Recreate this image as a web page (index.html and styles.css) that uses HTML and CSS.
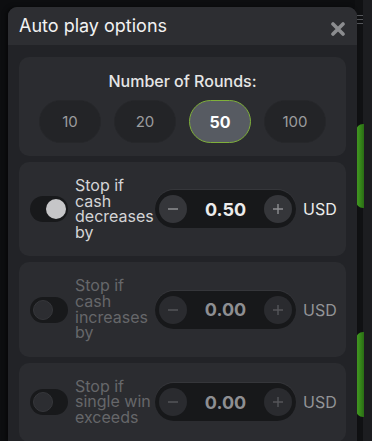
FILE: index.html
```html
<!DOCTYPE html>
<html lang="en">
<head>
<meta charset="utf-8">
<title>Auto play options</title>
<link rel="stylesheet" href="styles.css">
</head>
<body>
<div class="scene">
  <div class="scene-side">
    <div class="menu-lines"><span></span><span></span><span></span></div>
    <div class="green-bar bar-a"></div>
    <div class="green-bar bar-b"></div>
  </div>
</div>

<div class="modal">
  <div class="modal-header">
    <h1 class="modal-title">Auto play options</h1>
    <svg class="close" width="14" height="14" viewBox="0 0 14 14"><path d="M2 2L12 12M12 2L2 12" stroke="#8b8c8f" stroke-width="3.6" stroke-linecap="round"/></svg>
  </div>
  <div class="modal-body">
    <section class="card rounds">
      <div class="rounds-title">Number of Rounds:</div>
      <div class="rounds-list">
        <button class="round">10</button>
        <button class="round">20</button>
        <button class="round active">50</button>
        <button class="round">100</button>
      </div>
    </section>

    <section class="card option">
      <div class="toggle on"><span class="knob"></span></div>
      <div class="label">Stop if<br>cash<br>decreases<br>by</div>
      <div class="stepper">
        <span class="step-btn"><svg width="12" height="12" viewBox="0 0 12 12"><path d="M1 6H11" stroke="currentColor" stroke-width="1.4"/></svg></span>
        <span class="value">0.50</span>
        <span class="step-btn"><svg width="12" height="12" viewBox="0 0 12 12"><path d="M1 6H11M6 1V11" stroke="currentColor" stroke-width="1.4"/></svg></span>
      </div>
      <div class="currency">USD</div>
    </section>

    <section class="card option disabled">
      <div class="toggle"><span class="knob"></span></div>
      <div class="label">Stop if<br>cash<br>increases<br>by</div>
      <div class="stepper">
        <span class="step-btn"><svg width="12" height="12" viewBox="0 0 12 12"><path d="M1 6H11" stroke="currentColor" stroke-width="1.4"/></svg></span>
        <span class="value">0.00</span>
        <span class="step-btn"><svg width="12" height="12" viewBox="0 0 12 12"><path d="M1 6H11M6 1V11" stroke="currentColor" stroke-width="1.4"/></svg></span>
      </div>
      <div class="currency">USD</div>
    </section>

    <section class="card option disabled">
      <div class="toggle"><span class="knob"></span></div>
      <div class="label">Stop if<br>single win<br>exceeds</div>
      <div class="stepper">
        <span class="step-btn"><svg width="12" height="12" viewBox="0 0 12 12"><path d="M1 6H11" stroke="currentColor" stroke-width="1.4"/></svg></span>
        <span class="value">0.00</span>
        <span class="step-btn"><svg width="12" height="12" viewBox="0 0 12 12"><path d="M1 6H11M6 1V11" stroke="currentColor" stroke-width="1.4"/></svg></span>
      </div>
      <div class="currency">USD</div>
    </section>
  </div>
</div>
</body>
</html>
```

FILE: styles.css
```css
* { box-sizing: border-box; }

html, body {
  margin: 0;
  height: 100%;
}

body {
  background: #0d0e10;
  font-family: Inter, "Noto Sans", "Liberation Sans", sans-serif;
  overflow: hidden;
  position: relative;
}

.scene {
  display: flex;
  justify-content: flex-end;
  height: 100%;
}

.scene-side {
  position: relative;
  width: 17px;
  height: 100%;
  background: linear-gradient(90deg, #101113 0 8px, #1c1d20 8px 100%);
}

.menu-lines {
  position: absolute;
  left: 2px;
  top: 15px;
  display: flex;
  flex-direction: column;
  gap: 3px;
}
.menu-lines span {
  display: block;
  width: 6px;
  height: 1px;
  background: #55575b;
}

.green-bar {
  position: absolute;
  left: 1px;
  width: 8px;
  border-radius: 7px 0 0 7px;
  background: linear-gradient(90deg, #4fa82a, #3a8f1c 40%, #2a6c14);
}
.bar-a { top: 124px; height: 84px; }
.bar-b { top: 332px; height: 85px; }

.modal {
  position: absolute;
  left: 8px;
  top: 7px;
  width: 349px;
  bottom: 0;
  background: #222327;
  border-radius: 9px 9px 0 0;
  overflow: hidden;
  box-shadow: -2px 0 4px rgba(0,0,0,0.5);
}

.modal-header {
  height: 38px;
  background: #2d2e32;
  display: flex;
  align-items: center;
  justify-content: space-between;
  padding: 0 12px 0 11px;
}

.modal-title {
  margin: 0;
  font-size: 18px;
  font-weight: 400;
  color: #f2f2f2;
  padding-bottom: 2px;
}

.close { margin-top: 5px; }

.modal-body {
  padding: 12px 11px;
  display: flex;
  flex-direction: column;
  gap: 6px;
}

.card {
  background: #2b2c30;
  border-radius: 10px;
}

.rounds {
  height: 99px;
  padding: 15px 20px 0;
  display: flex;
  flex-direction: column;
  align-items: center;
}

.rounds-title {
  font-size: 16px;
  line-height: 19px;
  font-weight: 500;
  color: #e6e6e6;
}

.rounds-list {
  margin-top: 9px;
  display: flex;
  gap: 13px;
  width: 100%;
}

.round {
  flex: 1;
  height: 43px;
  border-radius: 22px;
  background: #232427;
  border: 1px solid #26272a;
  color: #9b9c9e;
  font-family: inherit;
  font-size: 15px;
  padding: 0;
}

.round.active {
  background: #575b62;
  border-color: #7fb03a;
  color: #ffffff;
  font-weight: 700;
  font-size: 16px;
}

.option {
  display: flex;
  align-items: center;
  padding: 16px 8px 16px 11px;
}

.toggle {
  flex: none;
  width: 38px;
  height: 26px;
  border-radius: 13px;
  background: #18191b;
  display: flex;
  align-items: center;
  padding: 0 3px;
}

.knob {
  width: 20px;
  height: 20px;
  border-radius: 50%;
  background: #2c2d31;
  border: 1px solid #36373b;
}

.toggle.on { justify-content: flex-end; padding: 0 2px; }
.toggle.on .knob {
  width: 20px;
  height: 20px;
  background: #c6c6c8;
  border: none;
}

.label {
  flex: none;
  width: 80px;
  margin-left: 7px;
  font-size: 16px;
  line-height: 15.6px;
  color: #d4d4d6;
  white-space: nowrap;
}

.stepper {
  flex: none;
  width: 141px;
  height: 38px;
  border-radius: 19px;
  background: #17181a;
  display: flex;
  align-items: center;
  justify-content: space-between;
  padding: 0 4px;
  box-shadow: 0 -1px 0 rgba(255,255,255,0.05);
}

.step-btn {
  width: 28px;
  height: 28px;
  border-radius: 50%;
  background: #35363a;
  color: #8e8f92;
  display: flex;
  align-items: center;
  justify-content: center;
}

.value {
  font-size: 18px;
  font-weight: 700;
  color: #ececec;
}

.currency {
  flex: none;
  margin-left: 7px;
  font-size: 16px;
  color: #ececec;
}

.disabled .label { color: #66676a; }
.disabled .value { color: #8e8f92; }
.disabled .currency { color: #939497; }
.disabled .step-btn { background: #2a2b2f; color: #55565a; }
```
